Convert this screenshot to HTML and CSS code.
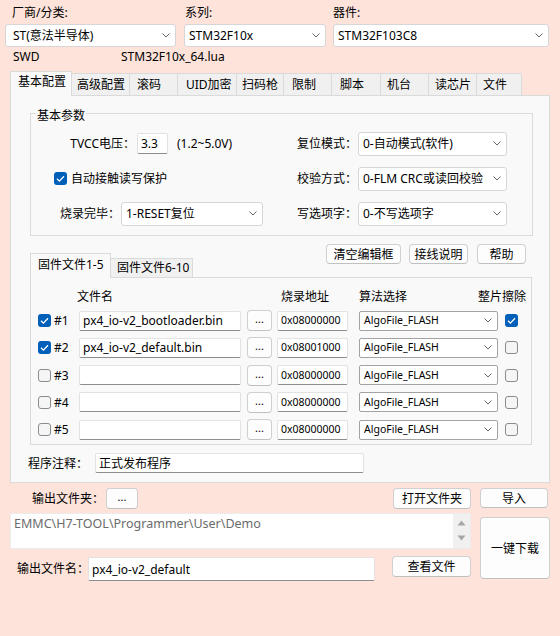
FILE: index.html
```html
<!DOCTYPE html>
<html>
<head>
<meta charset="utf-8">
<link rel="stylesheet" href="styles.css">
</head>
<body>
<div class="top">
  <div class="field f1">
    <div class="flabel">厂商/分类:</div>
    <div class="combo"><span>ST(意法半导体)</span><svg class="chev" viewBox="0 0 8 5"><path d="M0.5 0.5 L4 4 L7.5 0.5" fill="none" stroke="#666" stroke-width="1"/></svg></div>
  </div>
  <div class="field f2">
    <div class="flabel">系列:</div>
    <div class="combo"><span>STM32F10x</span><svg class="chev" viewBox="0 0 8 5"><path d="M0.5 0.5 L4 4 L7.5 0.5" fill="none" stroke="#666" stroke-width="1"/></svg></div>
  </div>
  <div class="field f3">
    <div class="flabel">器件:</div>
    <div class="combo"><span>STM32F103C8</span><svg class="chev" viewBox="0 0 8 5"><path d="M0.5 0.5 L4 4 L7.5 0.5" fill="none" stroke="#666" stroke-width="1"/></svg></div>
  </div>
</div>
<div class="info"><span class="swd">SWD</span><span>STM32F10x_64.lua</span></div>
<div class="tabs">
  <div class="tab active t1">基本配置</div>
  <div class="tab t2">高级配置</div>
  <div class="tab t3">滚码</div>
  <div class="tab t4">UID加密</div>
  <div class="tab t5">扫码枪</div>
  <div class="tab t6">限制</div>
  <div class="tab t7">脚本</div>
  <div class="tab t8">机台</div>
  <div class="tab t9">读芯片</div>
  <div class="tab t10">文件</div>
</div>
<div class="panel">
  <div class="group">
    <span class="gtitle">基本参数</span>
    <div class="cell">
      <span class="lbl l-tvcc">TVCC电压：</span>
      <div class="tin vin">3.3</div>
      <span class="range">(1.2~5.0V)</span>
    </div>
    <div class="cell">
      <span class="lbl l-right">复位模式：</span>
      <div class="combo gsel"><span>0-自动模式(软件)</span><svg class="chev" viewBox="0 0 8 5"><path d="M0.5 0.5 L4 4 L7.5 0.5" fill="none" stroke="#666" stroke-width="1"/></svg></div>
    </div>
    <div class="cell">
      <span class="cb on cbmain"><svg viewBox="0 0 13 13"><path d="M3 6.8 L5.4 9.1 L10 4.2" fill="none" stroke="#fff" stroke-width="1.3"/></svg></span>
      <span class="cbtext">自动接触读写保护</span>
    </div>
    <div class="cell">
      <span class="lbl l-right">校验方式：</span>
      <div class="combo gsel"><span>0-FLM CRC或读回校验</span><svg class="chev" viewBox="0 0 8 5"><path d="M0.5 0.5 L4 4 L7.5 0.5" fill="none" stroke="#666" stroke-width="1"/></svg></div>
    </div>
    <div class="cell">
      <span class="lbl l-done">烧录完毕：</span>
      <div class="combo dsel"><span>1-RESET复位</span><svg class="chev" viewBox="0 0 8 5"><path d="M0.5 0.5 L4 4 L7.5 0.5" fill="none" stroke="#666" stroke-width="1"/></svg></div>
    </div>
    <div class="cell">
      <span class="lbl l-right">写选项字：</span>
      <div class="combo gsel"><span>0-不写选项字</span><svg class="chev" viewBox="0 0 8 5"><path d="M0.5 0.5 L4 4 L7.5 0.5" fill="none" stroke="#666" stroke-width="1"/></svg></div>
    </div>
  </div>

  <div class="midrow">
    <div class="itabs">
      <div class="itab active">固件文件1-5</div>
      <div class="itab">固件文件6-10</div>
    </div>
    <div class="btns">
      <div class="btn b-clear">清空编辑框</div>
      <div class="btn b-wire">接线说明</div>
      <div class="btn b-help">帮助</div>
    </div>
  </div>

  <div class="ipanel">
    <div class="hdr">
      <span class="h1">文件名</span>
      <span class="h2">烧录地址</span>
      <span class="h3">算法选择</span>
      <span class="h4">整片擦除</span>
    </div>
    <div class="frows">
      <div class="frow">
        <span class="cb on"><svg viewBox="0 0 13 13"><path d="M3 6.8 L5.4 9.1 L10 4.2" fill="none" stroke="#fff" stroke-width="1.3"/></svg></span>
        <span class="rn">#1</span>
        <div class="tin fname">px4_io-v2_bootloader.bin</div>
        <div class="btn dots">...</div>
        <div class="tin addr">0x08000000</div>
        <div class="combo algo"><span>AlgoFile_FLASH</span><svg class="chev" viewBox="0 0 8 5"><path d="M0.5 0.5 L4 4 L7.5 0.5" fill="none" stroke="#666" stroke-width="1"/></svg></div>
        <span class="cb on ecb"><svg viewBox="0 0 13 13"><path d="M3 6.8 L5.4 9.1 L10 4.2" fill="none" stroke="#fff" stroke-width="1.3"/></svg></span>
      </div>
      <div class="frow">
        <span class="cb on"><svg viewBox="0 0 13 13"><path d="M3 6.8 L5.4 9.1 L10 4.2" fill="none" stroke="#fff" stroke-width="1.3"/></svg></span>
        <span class="rn">#2</span>
        <div class="tin fname">px4_io-v2_default.bin</div>
        <div class="btn dots">...</div>
        <div class="tin addr">0x08001000</div>
        <div class="combo algo"><span>AlgoFile_FLASH</span><svg class="chev" viewBox="0 0 8 5"><path d="M0.5 0.5 L4 4 L7.5 0.5" fill="none" stroke="#666" stroke-width="1"/></svg></div>
        <span class="cb off ecb"></span>
      </div>
      <div class="frow">
        <span class="cb off"></span>
        <span class="rn">#3</span>
        <div class="tin fname"></div>
        <div class="btn dots">...</div>
        <div class="tin addr">0x08000000</div>
        <div class="combo algo"><span>AlgoFile_FLASH</span><svg class="chev" viewBox="0 0 8 5"><path d="M0.5 0.5 L4 4 L7.5 0.5" fill="none" stroke="#666" stroke-width="1"/></svg></div>
        <span class="cb off ecb"></span>
      </div>
      <div class="frow">
        <span class="cb off"></span>
        <span class="rn">#4</span>
        <div class="tin fname"></div>
        <div class="btn dots">...</div>
        <div class="tin addr">0x08000000</div>
        <div class="combo algo"><span>AlgoFile_FLASH</span><svg class="chev" viewBox="0 0 8 5"><path d="M0.5 0.5 L4 4 L7.5 0.5" fill="none" stroke="#666" stroke-width="1"/></svg></div>
        <span class="cb off ecb"></span>
      </div>
      <div class="frow">
        <span class="cb off"></span>
        <span class="rn">#5</span>
        <div class="tin fname"></div>
        <div class="btn dots">...</div>
        <div class="tin addr">0x08000000</div>
        <div class="combo algo"><span>AlgoFile_FLASH</span><svg class="chev" viewBox="0 0 8 5"><path d="M0.5 0.5 L4 4 L7.5 0.5" fill="none" stroke="#666" stroke-width="1"/></svg></div>
        <span class="cb off ecb"></span>
      </div>
    </div>
  </div>

  <div class="note">
    <span class="nlbl">程序注释：</span>
    <div class="tin ninput">正式发布程序</div>
  </div>
</div>

<div class="bottom">
  <div class="bleft">
    <div class="brow1">
      <span class="olbl">输出文件夹：</span>
      <div class="btn odots">...</div>
      <div class="btn b-open">打开文件夹</div>
    </div>
    <div class="path">
      <div class="ptext">EMMC\H7-TOOL\Programmer\User\Demo</div>
      <div class="sbar">
        <svg viewBox="0 0 9 6" class="arr"><path d="M0.5 5.5 L4.5 0.5 L8.5 5.5 Z" fill="#a6a6a6"/></svg>
        <svg viewBox="0 0 9 6" class="arr"><path d="M0.5 0.5 L4.5 5.5 L8.5 0.5 Z" fill="#a6a6a6"/></svg>
      </div>
    </div>
    <div class="brow3">
      <span class="fnlbl">输出文件名：</span>
      <div class="tin oname">px4_io-v2_default</div>
      <div class="btn b-view">查看文件</div>
    </div>
  </div>
  <div class="bright">
    <div class="btn b-import">导入</div>
    <div class="btn b-go">一键下载</div>
  </div>
</div>
</body>
</html>
```

FILE: styles.css
```css
* { box-sizing: border-box; }
html, body { margin: 0; padding: 0; }
body {
  background: #fde3da;
  font-family: "Noto Sans", "Noto Sans CJK SC", sans-serif;
  font-size: 12px;
  color: #000;
  width: 560px;
  height: 636px;
  overflow: hidden;
  line-height: 1.25;
}

/* top selectors */
.top { display: flex; padding: 3px 0 0 5px; }
.field { display: flex; flex-direction: column; }
.f1 { width: 171px; margin-right: 8px; }
.f2 { width: 142px; margin-right: 7px; }
.f3 { width: 216px; }
.flabel { height: 21px; line-height: 20px; }
.f1 .flabel { padding-left: 7px; }
.f2 .flabel { padding-left: 1px; }

.combo {
  height: 23px;
  background: #fff;
  border: 1px solid #d6d6d6;
  border-radius: 3px;
  display: flex;
  align-items: center;
  justify-content: space-between;
  padding: 0 5px 0 4px;
  white-space: nowrap;
  overflow: hidden;
}
.f1 .combo { padding-left: 7px; }
.chev { flex: none; width: 8px; height: 5px; display: block; }

.info { display: flex; height: 24px; line-height: 20px; padding-left: 13px; }
.swd { width: 108px; }

/* main tabs */
.tabs {
  display: flex;
  align-items: flex-end;
  height: 25px;
  margin: 0 0 -1px 10px;
  position: relative;
  z-index: 1;
}
.tab {
  height: 22px;
  line-height: 21px;
  padding-left: 6px;
  background: #f0f0f0;
  border: 1px solid #dadada;
  border-left: none;
  border-bottom: none;
  margin-bottom: 1px;
  white-space: nowrap;
}
.tab.active {
  height: 25px;
  line-height: 20px;
  padding-left: 7px;
  background: #f9f9f9;
  border: 1px solid #dadada;
  border-bottom: none;
  margin-bottom: 0;
}
.t1 { width: 62px; }
.t2 { width: 58px; padding-left: 5px; }
.t3 { width: 48px; padding-left: 7px; }
.t4 { width: 59px; padding-left: 8px; }
.t5 { width: 47px; padding-left: 5px; }
.t6 { width: 48px; padding-left: 8px; }
.t7 { width: 49px; padding-left: 8px; }
.t8 { width: 48px; }
.t9 { width: 48px; }
.t10 { width: 45px; }

/* panel */
.panel {
  margin-left: 10px;
  width: 540px;
  height: 388px;
  background: #f9f9f9;
  border: 1px solid #dadada;
}

.group {
  position: relative;
  margin: 17px 0 0 19px;
  width: 503px;
  height: 123px;
  border: 1px solid #dcdcdc;
  display: grid;
  grid-template-columns: 254px 1fr;
  grid-template-rows: 25px 25px 25px;
  row-gap: 10px;
  padding-top: 17px;
}
.gtitle {
  position: absolute;
  left: 5px;
  top: -6px;
  background: #f9f9f9;
  padding: 0 1px;
  line-height: 16px;
}
.cell { display: flex; align-items: center; white-space: nowrap; }
.lbl { text-align: right; flex: none; }
.l-tvcc { width: 104px; }
.l-done { width: 89px; }
.l-right { width: 72px; }
.vin { width: 31px; height: 21px; margin-left: 2px; }
.range { margin-left: 9px; }
.cbmain { margin-left: 23px; }
.cbtext { margin-left: 4px; }
.dsel { width: 142px; height: 24px; margin-left: 1px; }
.gsel { width: 149px; height: 24px; margin-left: 1px; }

.tin {
  background: #fff;
  border: 1px solid #e2e2e2;
  border-bottom-color: #8d8d8d;
  border-radius: 2px;
  display: flex;
  align-items: center;
  padding-left: 3px;
  white-space: nowrap;
  overflow: hidden;
  flex: none;
}

.cb {
  width: 13px;
  height: 13px;
  border-radius: 3px;
  flex: none;
  display: block;
}
.cb svg { display: block; width: 13px; height: 13px; }
.cb.on { background: #005fb8; }
.cb.off { background: #f5f5f5; border: 1px solid #8b8b8b; }

/* middle row */
.midrow {
  display: flex;
  justify-content: space-between;
  height: 34px;
  margin: 8px 23px 0 19px;
}
.itabs { display: flex; align-items: flex-end; align-self: flex-end; height: 25px; position: relative; z-index: 1; }
.itab {
  width: 82px;
  height: 19px;
  line-height: 18px;
  padding-left: 6px;
  background: #f0f0f0;
  border: 1px solid #dadada;
  border-left: none;
  border-bottom: none;
  margin-bottom: 1px;
  white-space: nowrap;
}
.itab.active {
  width: 81px;
  height: 25px;
  line-height: 20px;
  padding-left: 7px;
  padding-top: 1px;
  background: #f9f9f9;
  border: 1px solid #dadada;
  border-bottom: none;
  margin-bottom: 0;
}
.btns { display: flex; align-items: flex-start; }
.btn {
  background: #fdfdfd;
  border: 1px solid #d0d0d0;
  border-bottom-color: #c0c0c0;
  border-radius: 4px;
  display: flex;
  align-items: center;
  justify-content: center;
  white-space: nowrap;
  flex: none;
}
.b-clear { width: 75px; height: 20px; }
.b-wire { width: 59px; height: 20px; margin-left: 8px; }
.b-help { width: 49px; height: 20px; margin-left: 9px; }

/* inner panel */
.ipanel {
  margin: -1px 0 0 19px;
  width: 502px;
  height: 168px;
  border: 1px solid #dadada;
  background: #f9f9f9;
  padding-top: 9px;
}
.hdr { display: flex; height: 20px; line-height: 20px; padding-left: 46px; white-space: nowrap; }
.h1 { width: 204px; }
.h2 { width: 78px; }
.h3 { width: 119px; }
.frows { margin-top: 1.5px; display: flex; flex-direction: column; row-gap: 3.3px; }
.frow { display: flex; align-items: center; height: 24px; padding-left: 7px; }
.rn { width: 28px; padding-left: 3px; flex: none; }
.fname { width: 162px; height: 20px; }
.dots { width: 25px; height: 21px; margin-left: 6px; font-size: 11px; padding-bottom: 3px; }
.addr { width: 71px; height: 20px; margin-left: 5px; font-size: 10.5px; }
.algo { width: 139px; height: 20px; margin-left: 11px; border-color: #a3a3a3; border-radius: 2px; font-size: 10.5px; padding-left: 4px; }
.ecb { margin-left: 7px; }

.note { display: flex; align-items: center; height: 20px; margin-top: 8px; }
.nlbl { margin-left: 17px; width: 67px; flex: none; white-space: nowrap; }
.ninput { width: 269px; height: 20px; }

/* bottom */
.bottom {
  display: grid;
  grid-template-columns: 461px 70px;
  column-gap: 9px;
  margin: 4px 0 0 10px;
}
.brow1 { display: flex; align-items: center; height: 22px; }
.olbl { margin-left: 22px; width: 74px; flex: none; white-space: nowrap; }
.odots { width: 32px; height: 21px; font-size: 11px; padding-bottom: 3px; }
.b-open { width: 78px; height: 21px; margin-left: auto; }
.path {
  margin-top: 4px;
  height: 36px;
  background: #fff;
  border: 1px solid #ececec;
  display: flex;
}
.ptext { flex: 1; padding: 2px 0 0 3px; color: #6b6b6b; font-size: 12.5px; white-space: nowrap; }
.sbar {
  width: 17px;
  background: #f0f0f0;
  display: flex;
  flex-direction: column;
  align-items: center;
  padding-top: 6px;
  row-gap: 9px;
}
.arr { width: 9px; height: 6px; display: block; }
.brow3 { display: flex; align-items: flex-start; height: 25px; margin-top: 7px; }
.fnlbl { margin-left: 7px; width: 71px; height: 25px; line-height: 25px; flex: none; white-space: nowrap; }
.oname { width: 287px; height: 24px; margin-top: 1px; }
.b-view { width: 79px; height: 21px; margin-left: auto; }

.bright { display: flex; flex-direction: column; }
.b-import { width: 68px; height: 20px; margin-top: 1px; }
.b-go { width: 70px; height: 62px; margin-top: 9px; }
```
